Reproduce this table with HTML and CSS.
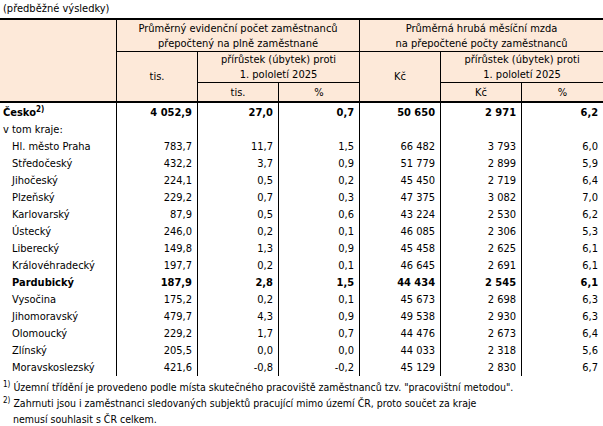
FILE: index.html
```html
<!DOCTYPE html>
<html lang="cs">
<head>
<meta charset="utf-8">
<link rel="stylesheet" href="styles.css">
</head>
<body>
<div class="caption">(předběžné výsledky)</div>
<table class="tbl">
  <colgroup>
    <col class="c-label"><col class="c-num"><col class="c-num"><col class="c-num"><col class="c-num"><col class="c-num"><col class="c-num">
  </colgroup>
  <thead>
    <tr class="h1">
      <th rowspan="3" class="br bb2"></th>
      <th colspan="3" class="br bb">Průměrný evidenční počet zaměstnanců<br>přepočtený na plně zaměstnané</th>
      <th colspan="3" class="bb">Průměrná hrubá měsíční mzda<br>na přepočtené počty zaměstnanců</th>
    </tr>
    <tr class="h2">
      <th rowspan="2" class="br bb2">tis.</th>
      <th colspan="2" class="br bb">přírůstek (úbytek) proti<br>1. pololetí 2025</th>
      <th rowspan="2" class="br bb2">Kč</th>
      <th colspan="2" class="bb">přírůstek (úbytek) proti<br>1. pololetí 2025</th>
    </tr>
    <tr class="h3">
      <th class="br bb2">tis.</th>
      <th class="br bb2">%</th>
      <th class="br bb2">Kč</th>
      <th class="bb2">%</th>
    </tr>
  </thead>
  <tbody>
    <tr class="bold"><td class="lbl">Česko<sup>2)</sup></td><td>4&nbsp;052,9</td><td>27,0</td><td>0,7</td><td>50&nbsp;650</td><td>2&nbsp;971</td><td>6,2</td></tr>
    <tr><td class="lbl">v tom kraje:</td><td></td><td></td><td></td><td></td><td></td><td></td></tr>
    <tr><td class="lbl ind">Hl. město Praha</td><td>783,7</td><td>11,7</td><td>1,5</td><td>66&nbsp;482</td><td>3&nbsp;793</td><td>6,0</td></tr>
    <tr><td class="lbl ind">Středočeský</td><td>432,2</td><td>3,7</td><td>0,9</td><td>51&nbsp;779</td><td>2&nbsp;899</td><td>5,9</td></tr>
    <tr><td class="lbl ind">Jihočeský</td><td>224,1</td><td>0,5</td><td>0,2</td><td>45&nbsp;450</td><td>2&nbsp;719</td><td>6,4</td></tr>
    <tr><td class="lbl ind">Plzeňský</td><td>229,2</td><td>0,7</td><td>0,3</td><td>47&nbsp;375</td><td>3&nbsp;082</td><td>7,0</td></tr>
    <tr><td class="lbl ind">Karlovarský</td><td>87,9</td><td>0,5</td><td>0,6</td><td>43&nbsp;224</td><td>2&nbsp;530</td><td>6,2</td></tr>
    <tr><td class="lbl ind">Ústecký</td><td>246,0</td><td>0,2</td><td>0,1</td><td>46&nbsp;085</td><td>2&nbsp;306</td><td>5,3</td></tr>
    <tr><td class="lbl ind">Liberecký</td><td>149,8</td><td>1,3</td><td>0,9</td><td>45&nbsp;458</td><td>2&nbsp;625</td><td>6,1</td></tr>
    <tr><td class="lbl ind">Královéhradecký</td><td>197,7</td><td>0,2</td><td>0,1</td><td>46&nbsp;645</td><td>2&nbsp;691</td><td>6,1</td></tr>
    <tr class="bold"><td class="lbl ind">Pardubický</td><td>187,9</td><td>2,8</td><td>1,5</td><td>44&nbsp;434</td><td>2&nbsp;545</td><td>6,1</td></tr>
    <tr><td class="lbl ind">Vysočina</td><td>175,2</td><td>0,2</td><td>0,1</td><td>45&nbsp;673</td><td>2&nbsp;698</td><td>6,3</td></tr>
    <tr><td class="lbl ind">Jihomoravský</td><td>479,7</td><td>4,3</td><td>0,9</td><td>49&nbsp;538</td><td>2&nbsp;930</td><td>6,3</td></tr>
    <tr><td class="lbl ind">Olomoucký</td><td>229,2</td><td>1,7</td><td>0,7</td><td>44&nbsp;476</td><td>2&nbsp;673</td><td>6,4</td></tr>
    <tr><td class="lbl ind">Zlínský</td><td>205,5</td><td>0,0</td><td>0,0</td><td>44&nbsp;033</td><td>2&nbsp;318</td><td>5,6</td></tr>
    <tr><td class="lbl ind">Moravskoslezský</td><td>421,6</td><td>-0,8</td><td>-0,2</td><td>45&nbsp;129</td><td>2&nbsp;830</td><td>6,7</td></tr>
  </tbody>
</table>
<div class="notes">
  <p class="note"><sup>1)</sup> Územní třídění je provedeno podle místa skutečného pracoviště zaměstnanců tzv. "pracovištní metodou".</p>
  <p class="note"><sup>2)</sup> Zahrnuti jsou i zaměstnanci sledovaných subjektů pracující mimo území ČR, proto součet za kraje<br><span class="cont">nemusí souhlasit s ČR celkem.</span></p>
</div>
</body>
</html>
```

FILE: styles.css
```css
html, body {
  margin: 0;
  padding: 0;
  background: #ffffff;
}
body {
  font-family: "DejaVu Sans Condensed", "DejaVu Sans", sans-serif;
  font-size: 11px;
  color: #000;
  width: 603px;
}
.caption {
  height: 18px;
  line-height: 18px;
  padding-left: 3px;
}
.tbl {
  width: 603px;
  table-layout: fixed;
  border-collapse: separate;
  border-spacing: 0;
  border-top: 2px solid #000;
}
.c-label { width: 117px; }
.c-num { width: 81px; }
.tbl th {
  background: #fde9d9;
  font-weight: normal;
  text-align: center;
  vertical-align: middle;
  padding: 0;
  line-height: 15px;
}
.tbl .br { border-right: 1px solid #000; }
.tbl .bb { border-bottom: 1px solid #000; }
.tbl .bb2 { border-bottom: 2px solid #000; }
.h1 { height: 32px; }
.h2 { height: 30px; }
.h3 { height: 20px; }
.tbl td {
  padding: 0 5px 0 0;
  height: 17px;
  line-height: 17px;
  text-align: right;
  border-right: 1px solid #000;
  white-space: nowrap;
}
.tbl td:last-child { border-right: none; }
.tbl td.lbl {
  text-align: left;
  padding-left: 3px;
}
.tbl td.ind { padding-left: 12px; }
.bold td { font-weight: bold; }
.tbl tbody tr:first-child td { padding-top: 1px; }
sup {
  font-size: 8px;
  line-height: 0;
  vertical-align: 4px;
}
.notes {
  padding-top: 3px;
  font-size: 10.5px;
}
.note {
  margin: 0;
  padding-left: 3px;
  line-height: 16px;
}
.cont { padding-left: 10px; }
```
